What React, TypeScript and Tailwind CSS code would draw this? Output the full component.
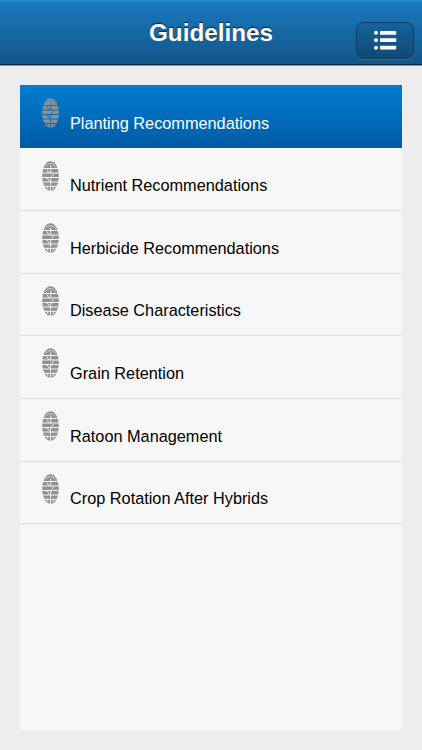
const items = [
  { name: "Planting Recommendations", active: true },
  { name: "Nutrient Recommendations", active: false },
  { name: "Herbicide Recommendations", active: false },
  { name: "Disease Characteristics", active: false },
  { name: "Grain Retention", active: false },
  { name: "Ratoon Management", active: false },
  { name: "Crop Rotation After Hybrids", active: false },
];

const GrainIcon = () => {
  return (
    <svg className="mt-[13px] h-[30px] w-[17px] shrink-0" viewBox="0 0 17 30">
      <mask id="grain" maskUnits="userSpaceOnUse" x="0" y="0" width="17" height="30">
        <ellipse cx="8.5" cy="15" rx="8.4" ry="14.8" fill="#fff" />
        <g fill="none" stroke="#000">
          <path d="M0 7.5h17M0 12h17M0 16.5h17M0 21h17M0 25.3h17" strokeWidth="1" />
          <path d="M3.5 5.5Q6 2.2 8.5 2.5Q11 2.2 13.5 5.5" strokeWidth="0.6" />
          <path d="M8.8 4.5v8M5 8.5l2 3.5M12 13q-3 1-3.5 6v5M3.5 16.5q2.5 0 3.5 3.5" strokeWidth="0.9" />
          <path d="M8.5 25v5M5.3 25l.7 3M11.7 25l-.7 3" strokeWidth="0.9" />
        </g>
      </mask>
      <rect width="17" height="30" fill="#919191" mask="url(#grain)" />
    </svg>
  );
};

const Header = () => {
  return (
    <header className="flex h-[65px] items-start border-t-2 border-b border-t-[#2088d2] border-b-[#0b2944] bg-linear-to-b from-[#1979be] to-[#125789] shadow-[0_1px_0_#8993a0]">
      <div className="w-[66px]"></div>
      <h1 className="mt-[13px] flex-1 text-center text-[24.3px] leading-[36px] font-bold text-white [text-shadow:0_-1px_1px_#06243d]">
        Guidelines
      </h1>
      <button
        aria-label="Menu"
        className="mt-[19.5px] mr-[8px] flex h-[37px] w-[58px] items-center justify-center rounded-[8px] border border-[#0d3d65] bg-linear-to-b from-[#17639c] to-[#104975] shadow-[0_1px_0_#2370a8]"
      >
        <svg className="h-[20px] w-[24px]" viewBox="0 0 24 20" fill="#fff">
          <circle cx="3" cy="2.7" r="2" />
          <circle cx="3" cy="10.2" r="2" />
          <circle cx="3" cy="17.7" r="2" />
          <path d="M7 .9h16.2v3.8H7zM7 8.3h16.2v3.8H7zM7 15.8h16.2v3.8H7z" />
        </svg>
      </button>
    </header>
  );
};

export default function App() {
  return (
    <div className="flex h-[750px] w-[422px] flex-col bg-[#ededed] font-['Liberation_Sans',Arial,sans-serif]">
      <Header />
      <main className="mx-[20px] mt-[20px] mb-[20px] flex-1 bg-[#f7f7f7] shadow-[0_0_1px_#f3f3f3]">
        <ul>
          {items.map((item) => (
            <li
              key={item.name}
              className={
                item.active
                  ? "flex h-[62.6px] bg-linear-to-b from-[#007cd4] to-[#005ca2] pl-[22px] text-white"
                  : "flex h-[62.6px] pl-[22px] text-black shadow-[0_1px_0_#dfdfdf]"
              }
            >
              <GrainIcon />
              <span className="mt-[25.7px] ml-[11px] text-[16.3px] leading-[24px]">
                {item.name}
              </span>
            </li>
          ))}
        </ul>
      </main>
    </div>
  );
}
